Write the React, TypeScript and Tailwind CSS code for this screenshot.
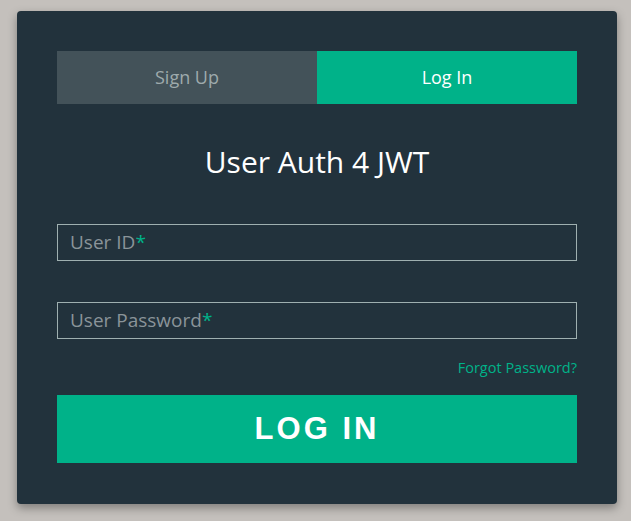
export default function App() {
  return (
    <div className="min-h-[521px] w-full bg-[#c4c0bc] pl-[17px] pt-[11px] font-['Open_Sans',sans-serif]">
      <div className="w-[600px] rounded-[4px] bg-[#22323c] px-[40px] pt-[40px] pb-[41px] shadow-[0_4px_10px_rgba(0,0,0,0.35)]">
        {/* Tabs */}
        <div className="flex h-[53px]">
          <div className="flex flex-1 items-center justify-center bg-[#435259] text-[18px] text-[#9eaaac]">Sign Up</div>
          <div className="flex flex-1 items-center justify-center bg-[#00b289] text-[18px] text-white">Log In</div>
        </div>

        <h1 className="mt-[38px] text-center text-[30px] leading-[40px] text-white">User Auth 4 JWT</h1>

        <div className="mt-[42px] flex h-[37px] items-center border border-[#9fb0b0] px-[12px] text-[19px] text-[#8a9499]">
          User ID<span className="text-[#00b289]">*</span>
        </div>

        <div className="mt-[41px] flex h-[37px] items-center border border-[#9fb0b0] px-[12px] text-[19px] text-[#8a9499]">
          User Password<span className="text-[#00b289]">*</span>
        </div>

        <div className="mt-[19px] text-right text-[14.5px] leading-[20px] text-[#00b289]">Forgot Password?</div>

        <button className="mt-[17px] flex h-[68px] w-full items-center justify-center bg-[#00b289] font-['Liberation_Sans',sans-serif] text-[31px] font-bold tracking-[3px] text-white">
          LOG IN
        </button>
      </div>
    </div>
  );
}
